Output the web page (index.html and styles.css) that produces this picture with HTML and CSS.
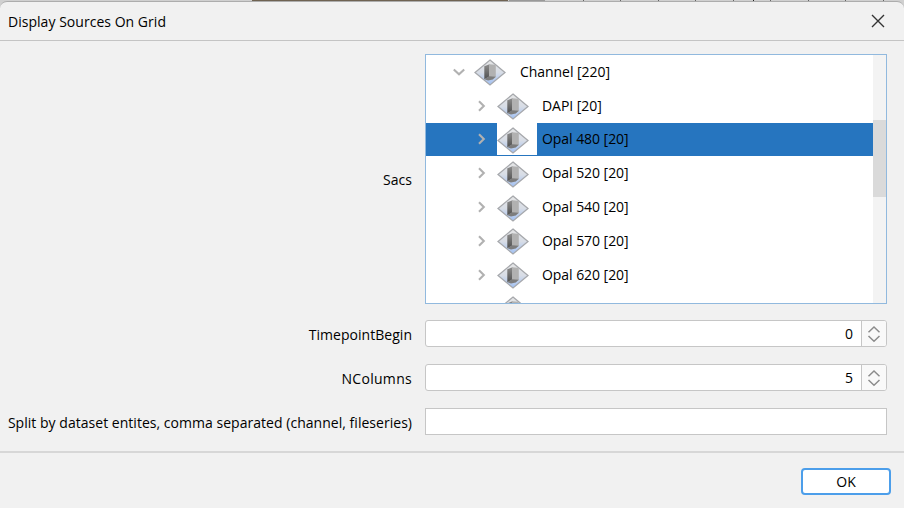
FILE: index.html
```html
<!DOCTYPE html>
<html lang="en">
<head>
<meta charset="utf-8">
<title>Display Sources On Grid</title>
<link rel="stylesheet" href="styles.css">
</head>
<body>
<svg class="defs" aria-hidden="true">
  <defs>
    <linearGradient id="tile" x1="0" y1="0" x2="0" y2="1">
      <stop offset="0" stop-color="#e6e6e6"/><stop offset=".5" stop-color="#d8dde6"/><stop offset="1" stop-color="#a0c0f4"/>
    </linearGradient>
    <linearGradient id="side" x1="0" y1="0" x2="0" y2="1">
      <stop offset="0" stop-color="#8c8c8c"/><stop offset="1" stop-color="#505050"/>
    </linearGradient>
    <symbol id="source" viewBox="0 0 32 27">
      <path d="M16 1 31 13.5 16 26 1 13.5Z" fill="url(#tile)" stroke="#a6a8ac" stroke-width="1.3"/>
      <path d="M10.3 7.3 15.5 5.2V17.6L10.3 20.3Z" fill="url(#side)"/>
      <path d="M15 5.2 20.8 5.8Q21.8 6 21.8 7.1V18.2H15Z" fill="#b1b1b1"/>
      <path d="M10.3 20.3 15 17.2 21.8 17.8 18.8 20.6 14 21.4Z" fill="#7c7c7c"/>
    </symbol>
    <symbol id="right" viewBox="0 0 12 12"><path d="M3 1.2 7.8 6 3 10.8" fill="none" stroke="#b1b1b1" stroke-width="2.1"/></symbol>
    <symbol id="down" viewBox="0 0 12 12"><path d="M.8 3.4 6 8.3 11.2 3.4" fill="none" stroke="#b1b1b1" stroke-width="2.1"/></symbol>
    <symbol id="arrows" viewBox="0 0 14 18"><path d="M1.5 7.2 7 2 12.5 7.2M1.5 11 7 16.2 12.5 11" fill="none" stroke="#8c8c8c" stroke-width="1.5"/></symbol>
  </defs>
</svg>
<div class="backdrop">
  <div class="dialog">
    <header class="titlebar">
      <span class="title">Display Sources On Grid</span>
      <svg class="close" viewBox="0 0 14 14"><path d="M1 1 13 13M13 1 1 13" fill="none" stroke="#333" stroke-width="1.35"/></svg>
    </header>
    <main class="form">
      <label class="label">Sacs</label>
      <div class="tree">
        <div class="rows">
          <div class="row parent"><svg class="chevron"><use href="#down"/></svg><span class="pic"><svg><use href="#source"/></svg></span><span class="name">Channel [220]</span></div>
          <div class="row"><svg class="chevron"><use href="#right"/></svg><span class="pic"><svg><use href="#source"/></svg></span><span class="name">DAPI [20]</span></div>
          <div class="row selected"><svg class="chevron"><use href="#right"/></svg><span class="pic"><svg><use href="#source"/></svg></span><span class="name">Opal 480 [20]</span></div>
          <div class="row"><svg class="chevron"><use href="#right"/></svg><span class="pic"><svg><use href="#source"/></svg></span><span class="name">Opal 520 [20]</span></div>
          <div class="row"><svg class="chevron"><use href="#right"/></svg><span class="pic"><svg><use href="#source"/></svg></span><span class="name">Opal 540 [20]</span></div>
          <div class="row"><svg class="chevron"><use href="#right"/></svg><span class="pic"><svg><use href="#source"/></svg></span><span class="name">Opal 570 [20]</span></div>
          <div class="row"><svg class="chevron"><use href="#right"/></svg><span class="pic"><svg><use href="#source"/></svg></span><span class="name">Opal 620 [20]</span></div>
          <div class="row"><span class="chevron"></span><span class="pic"><svg><use href="#source"/></svg></span></div>
        </div>
        <div class="scrollbar"><div class="thumb"></div></div>
      </div>
      <label class="label">TimepointBegin</label>
      <div class="field spinner"><span class="value">0</span><span class="stepper"><svg><use href="#arrows"/></svg></span></div>
      <label class="label columns">NColumns</label>
      <div class="field spinner"><span class="value">5</span><span class="stepper"><svg><use href="#arrows"/></svg></span></div>
      <label class="label">Split by dataset entites, comma separated (channel, fileseries)</label>
      <div class="field"></div>
    </main>
    <footer class="footer"><button class="ok">OK</button></footer>
  </div>
</div>
</body>
</html>
```
FILE: styles.css
```css
* { box-sizing: border-box; }
body {
  margin: 0;
  font: 14px/20px "Open Sans", "Noto Sans", sans-serif;
  color: #000;
  overflow: hidden;
}
.defs { position: absolute; width: 0; height: 0; }
.backdrop {
  width: 904px;
  height: 508px;
  padding-top: 1px;
  background:
    linear-gradient(#6f6352, #6f6352) 252px 0 / 256px 2px no-repeat,
    linear-gradient(#999, #999) 509px 0 / 36px 2px no-repeat,
    linear-gradient(#222, #222) 753px 0 / 1px 2px no-repeat,
    repeating-linear-gradient(90deg, #666 0 1px, transparent 1px 37.5px) 583px 0 / 321px 2px no-repeat,
    #d0d0d0;
}
.dialog {
  height: 507px;
  display: flex;
  flex-direction: column;
  background: #f1f1f1;
  border-top: 1px solid #adadad;
  border-radius: 7px 7px 0 0;
}
.titlebar {
  height: 39px;
  flex: none;
  display: flex;
  align-items: center;
  justify-content: space-between;
  padding: 0 19px 0 8px;
  border-bottom: 1px solid #c4c4c4;
}
.title { letter-spacing: .03px; padding-top: 2px; }
.close { width: 14px; height: 14px; }
.form {
  height: 410px;
  flex: none;
  display: grid;
  grid-template-columns: 412px 462px;
  grid-template-rows: 249px 27px 27px 27px;
  column-gap: 13px;
  row-gap: 17px;
  padding-top: 13px;
  align-items: center;
  align-content: start;
}
.label { text-align: right; white-space: nowrap; letter-spacing: .03px; padding-top: 2px; }
.label.columns { letter-spacing: .3px; }
.tree {
  height: 250px;
  align-self: start;
  display: flex;
  overflow: hidden;
  background: #fff;
  border: 1px solid #91b9de;
}
.rows { flex: 1; height: 248px; overflow: hidden; }
.row {
  height: 33.8px;
  display: flex;
  align-items: center;
  padding-left: 50px;
}
.row.parent { padding-left: 27px; }
.row.selected { background: #2675bf; }
.chevron { width: 12px; height: 12px; flex: none; margin-right: 9px; }
.pic {
  width: 40px;
  height: 32px;
  flex: none;
  padding-top: 3.5px;
  margin-right: 5px;
}
.parent .pic { margin-right: 6px; }
.pic svg { display: block; width: 32px; height: 27px; }
.selected .pic { background: #fff; }
.name { letter-spacing: -.05px; white-space: nowrap; }
.scrollbar { width: 13px; background: #f3f3f3; padding-top: 65px; }
.thumb { height: 77px; background: #dadada; }
.field {
  height: 27px;
  display: flex;
  background: #fff;
  border: 1px solid #c6c6c6;
}
.spinner { border-radius: 3px; overflow: hidden; }
.value { flex: 1; text-align: right; padding: 3px 8px 0 0; }
.stepper {
  width: 25px;
  display: flex;
  align-items: center;
  justify-content: center;
  background: #f9f9f9;
  border-left: 1px solid #c6c6c6;
}
.stepper svg { width: 14px; height: 18px; }
.footer {
  flex: 1;
  display: flex;
  justify-content: flex-end;
  align-items: flex-start;
  padding: 15px 13px 0 0;
  border-top: 2px solid #d7d7d7;
}
.ok {
  width: 90px;
  height: 27px;
  padding: 1px 0 0;
  font: inherit;
  color: inherit;
  background: #fff;
  border: 2px solid #4c9eea;
  border-radius: 4px;
}
```
